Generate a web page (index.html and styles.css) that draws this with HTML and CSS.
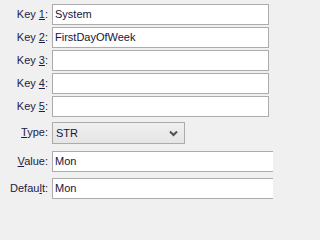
FILE: index.html
```html
<!DOCTYPE html>
<html>
<head>
<meta charset="utf-8">
<link rel="stylesheet" href="styles.css">
</head>
<body>
<div class="form">
  <label class="lbl">Key <u>1</u>:</label><div class="field key">System</div>
  <label class="lbl">Key <u>2</u>:</label><div class="field key">FirstDayOfWeek</div>
  <label class="lbl">Key <u>3</u>:</label><div class="field key"></div>
  <label class="lbl">Key <u>4</u>:</label><div class="field key"></div>
  <label class="lbl">Key <u>5</u>:</label><div class="field key"></div>
  <label class="lbl sel-row"><u>T</u>ype:</label>
  <div class="select sel-row"><span>STR</span>
    <svg class="chev" width="9" height="7" viewBox="0 0 9 7"><path d="M1 1.5 L4.5 5 L8 1.5" fill="none" stroke="#505050" stroke-width="2"/></svg>
  </div>
  <label class="lbl val-row"><u>V</u>alue:</label><div class="field wide val-row">Mon</div>
  <label class="lbl def-row">Defau<u>l</u>t:</label><div class="field wide def-row">Mon</div>
</div>
</body>
</html>
```
FILE: styles.css
```css
html, body {
  margin: 0;
  padding: 0;
  background: #f0f0f0;
  overflow: hidden;
}
.form {
  width: 273px;
  height: 200px;
  overflow: hidden;
  box-sizing: border-box;
  display: grid;
  grid-template-columns: 48px 221px;
  grid-auto-rows: min-content;
  align-content: start;
  column-gap: 4px;
  row-gap: 2px;
  padding-top: 4px;
  font-family: "Liberation Sans", Arial, sans-serif;
  font-size: 11px;
  color: #1c1c44;
}
.lbl {
  text-align: right;
  line-height: 21px;
  height: 21px;
  white-space: nowrap;
}
.lbl u {
  text-decoration-thickness: 1px;
  text-underline-offset: 1px;
}
.field {
  box-sizing: border-box;
  height: 21px;
  border: 1px solid #acacac;
  background: #fff;
  padding-left: 2px;
  line-height: 19px;
  color: #141440;
}
.key {
  width: 217px;
}
.wide {
  width: 260px;
}
.sel-row {
  margin-top: 3px;
}
.select {
  box-sizing: border-box;
  width: 133px;
  height: 22px;
  border: 1px solid #acacac;
  background: linear-gradient(#f0f0f0, #e5e5e5);
  display: flex;
  align-items: center;
  justify-content: space-between;
  padding-left: 3px;
  padding-right: 6px;
  color: #141440;
}
.chev {
  display: block;
}
.val-row {
  margin-top: 5px;
}
.def-row {
  margin-top: 4px;
}
```
